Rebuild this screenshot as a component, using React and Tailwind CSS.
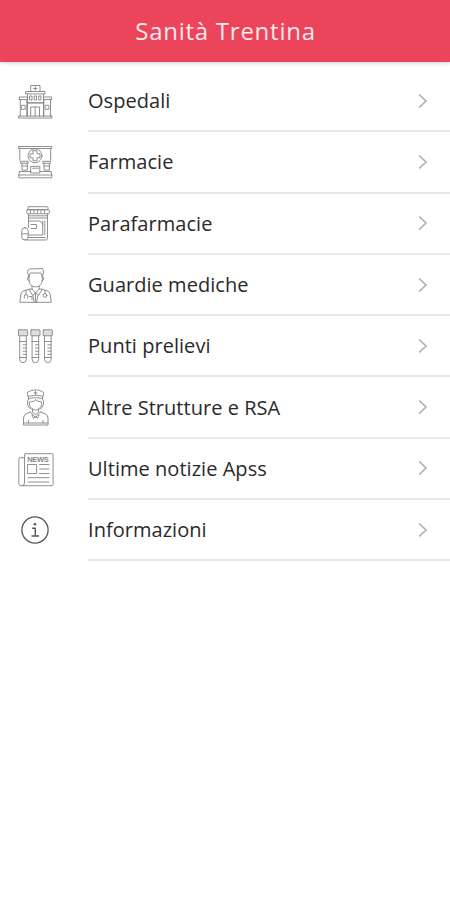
function IconBase({ children, className = "stroke-[#858585]" }) {
  return (
    <svg
      viewBox="0 0 40 40"
      fill="none"
      strokeWidth="0.9"
      strokeLinecap="round"
      strokeLinejoin="round"
      className={`mb-[1.5px] h-10 w-10 shrink-0 ${className}`}
    >
      {children}
    </svg>
  );
}

function HospitalIcon() {
  return (
    <IconBase>
      <path d="M4 35h33v2H4zM5.3 35V18.5M11.8 35V18.5M28.8 35V18.5M35.5 35V18.5" />
      <path d="M4.3 18.5V16h8M36.5 18.5V16h-8M4.3 18.5h8M28.5 18.5h8" />
      <path d="M11 10.5h19v2.4H11zM12.5 13v9h16v-9M12.5 22v13M28.5 22v13" />
      <path d="M15.7 10.5v-6H25v6M20.3 5.8v3.4M18.6 7.5H22" />
      <path d="M15 15h2v4h-2zM19.5 15h2v4h-2zM24 15h2v4h-2zM12.5 21.7h16" />
      <path d="M15.7 35v-9h8.8v9M20.1 26v9M6.8 24.3h3.4v4H6.8zM30.5 24.3h3.4v4h-3.4z" />
    </IconBase>
  );
}

function PharmacyIcon() {
  return (
    <IconBase>
      <path d="M3.8 4.5h33v2h-33zM4.8 6.5v11.8M35.7 6.5v11.8" />
      <circle cx="20" cy="13.8" r="7" />
      <path d="M18 8.8h4v3h3v4h-3v3h-4v-3h-3v-4h3z" />
      <path d="M6 19.3h7.2v2H6zM7 21.3v6.8h5.4v-6.8M28.2 19.3h7.2v2h-7.2zM29 21.3v6.8h5.4v-6.8M7 24h5.4M29 24h5.4" />
      <path d="M16 24.3h8.8V31H16zM17.5 26.2h6M4.5 29.5h11.5M25 29.5h10.8" />
      <path d="M4.5 29.5L3.8 33v2.8h33V33l-1-3.5M3.8 33h33" />
    </IconBase>
  );
}

function PillBottleIcon() {
  return (
    <IconBase>
      <path d="M14 3.7h18q1 0 1 1v2H13v-2q0-1 1-1z" />
      <path d="M12.5 6.7h21q.8 0 .8.8v2.2q0 1-1 1H12.7q-1 0-1-1V7.500q0-.8.8-.8z" />
      <path d="M15.5 7.5v2M19 7.5v2M22.5 7.5v2M26 7.5v2M29.5 7.5v2" />
      <path d="M13.5 10.8v2h19v-2M13.5 12.8v11.7M32.5 12.8V35q0 2-2 2H10M13.5 15h19" />
      <path d="M13.5 18H25l2.7 3v11h-14M16 21.5h5.5v4H16M27.7 18v4M29.8 18v14" />
      <path d="M10 24.7q3.2 0 3.2 3V34q0 3-3.2 3t-3.2-3v-6.3q0-3 3.2-3zM6.8 30.8h6.4M13.2 34.5h17" />
    </IconBase>
  );
}

function DoctorIcon() {
  return (
    <IconBase>
      <path d="M14 11.5l-1.3-3V5.2L14.5 4l13-.5 1.3 3.5-1.5 4.5L25.8 8H15.5z" />
      <path d="M14 11v5q1 5.5 6.5 6 5.8-.5 6.800-6v-5M14 12q-2 0-1.5 2t1.8 1.7M27.3 12q2 0 1.5 2T27 15.7" />
      <path d="M17 21.5V24l3.500 4 3.700-4v-2.5M17 24l-3 .2 3.500 6 3-2.200 3.200 2.200 3.600-6-3.100-.2" />
      <path d="M14 24.2l-6 2q-2 1-2.3 3.800l-.9 7.300h31.500L35.300 30q-.3-2.800-2.300-3.800l-5.700-2M20.5 28v9.3" />
      <path d="M11 25.3v4.500M9.300 33v-2q0-1.500 1.700-1.500t1.800 1.500v2M30 25.5v3" />
      <circle cx="30" cy="30.5" r="1.9" />
      <path d="M18 30.5l1 6.800M23 30.5l-1.500 6.800M14.500 31.500h2.500v3" />
    </IconBase>
  );
}

function TestTubesIcon() {
  return (
    <IconBase>
      {[3.4, 15.8, 28.2].map((x) => (
        <g key={x} transform={`translate(${x} 0)`}>
          <rect x="0" y="3.8" width="9.2" height="6" rx="0.8" className="fill-[#dedede]" />
          <path d="M1.3 9.8v23.4q0 3.5 3.3 3.5t3.3-3.5V9.8M1.3 15.5h6.6M1.3 31.5h6.6M4.6 18.8h3.3M4.6 22h3.3M4.6 25.2h3.3M4.6 28.3h3.3" />
        </g>
      ))}
    </IconBase>
  );
}

function NurseIcon() {
  return (
    <IconBase>
      <path d="M13.5 11.5l-1.3-6q4-2.7 8.300-2.7t8.300 2.7l-1.300 6q-7-2-14 0zM13.2 9.2q7.3-2 14.6 0M20.5 4.3v3.2M18.9 5.9h3.2" />
      <path d="M13.5 11.500q-2 3.500-.7 6.500.2 2.500 3.200 4M27.500 11.500q2 3.500.7 6.500-.2 2.500-3.200 4" />
      <path d="M14.5 15q6-.5 6-2.5 1 2 6 2.5v2.5q-1 5-6 5.5-5-.5-6-5.5z" />
      <path d="M17.5 22v3l3 3 3-3v-3M15.5 25l5 5.5 5-5.5M17 28l1.5 3.5 2-2 2 2 1.5-3.5" />
      <path d="M15.5 25l-4 1.7q-2.7 1-3 4.3v7h24.5v-7q-.3-3.3-3-4.3L25.5 25M8.500 36h24.500M13.5 33.5V36M28 33.5V36" />
    </IconBase>
  );
}

function NewsIcon() {
  return (
    <IconBase>
      <path d="M10.5 4.7h26.6q1 0 1 1v30q0 1-1 1H6q-2.2 0-2.2-2V10q0-1.3 1.3-1.3h4.4V34q0 2.7-2.7 2.7M9.5 9V5.7q0-1 1-1" />
      <text
        x="12.2"
        y="13.2"
        textLength="21.5"
        stroke="none"
        className="fill-[#888888] font-['Liberation_Sans'] text-[7.5px] font-bold"
      >
        NEWS
      </text>
      <path d="M12.8 15.5h8.8v9h-8.800zM24.5 15.5H34M24.5 20H34M24.5 24.5H34M13 28.7h21M13 33h21" />
    </IconBase>
  );
}

function InfoIcon() {
  return (
    <IconBase className="stroke-[#555555]">
      <circle cx="20" cy="20" r="13.1" strokeWidth="1.3" />
      <circle cx="19.9" cy="14.2" r="1.3" stroke="none" className="fill-[#555555]" />
      <path d="M17.6 18.3h2.7v7.600M17 26h6.600" strokeWidth="1.4" />
    </IconBase>
  );
}

function Chevron() {
  return (
    <svg
      viewBox="0 0 10 16"
      fill="none"
      strokeWidth="1.7"
      className="mr-[22px] h-4 w-2.5 shrink-0 stroke-[#b0b0b0]"
    >
      <path d="M1.2 1.5L8 8l-6.8 6.5" />
    </svg>
  );
}

const menu = [
  { label: "Ospedali", Icon: HospitalIcon },
  { label: "Farmacie", Icon: PharmacyIcon },
  { label: "Parafarmacie", Icon: PillBottleIcon },
  { label: "Guardie mediche", Icon: DoctorIcon },
  { label: "Punti prelievi", Icon: TestTubesIcon },
  { label: "Altre Strutture e RSA", Icon: NurseIcon },
  { label: "Ultime notizie Apss", Icon: NewsIcon },
  { label: "Informazioni", Icon: InfoIcon },
];

export default function App() {
  return (
    <div className="min-h-screen bg-white font-['Open_Sans',sans-serif]">
      <header className="flex h-[62px] items-center justify-center bg-[#ec445a] shadow-[0_1px_4px_rgba(0,0,0,0.2)]">
        <h1 className="pl-px text-[24px] tracking-[0.75px] text-[#ffe9ec]">
          Sanità Trentina
        </h1>
      </header>

      <ul className="pt-[9px]">
        {menu.map(({ label, Icon }) => (
          <li key={label} className="flex h-[61.3px] items-center pl-[15px]">
            <Icon />
            <div className="ml-[33px] flex h-full flex-1 items-center justify-between border-b-2 border-[#e8e8e8]">
              <span className="pt-px text-[20px] tracking-[0.04px] text-[#2a2a2a]">
                {label}
              </span>
              <Chevron />
            </div>
          </li>
        ))}
      </ul>
    </div>
  );
}
